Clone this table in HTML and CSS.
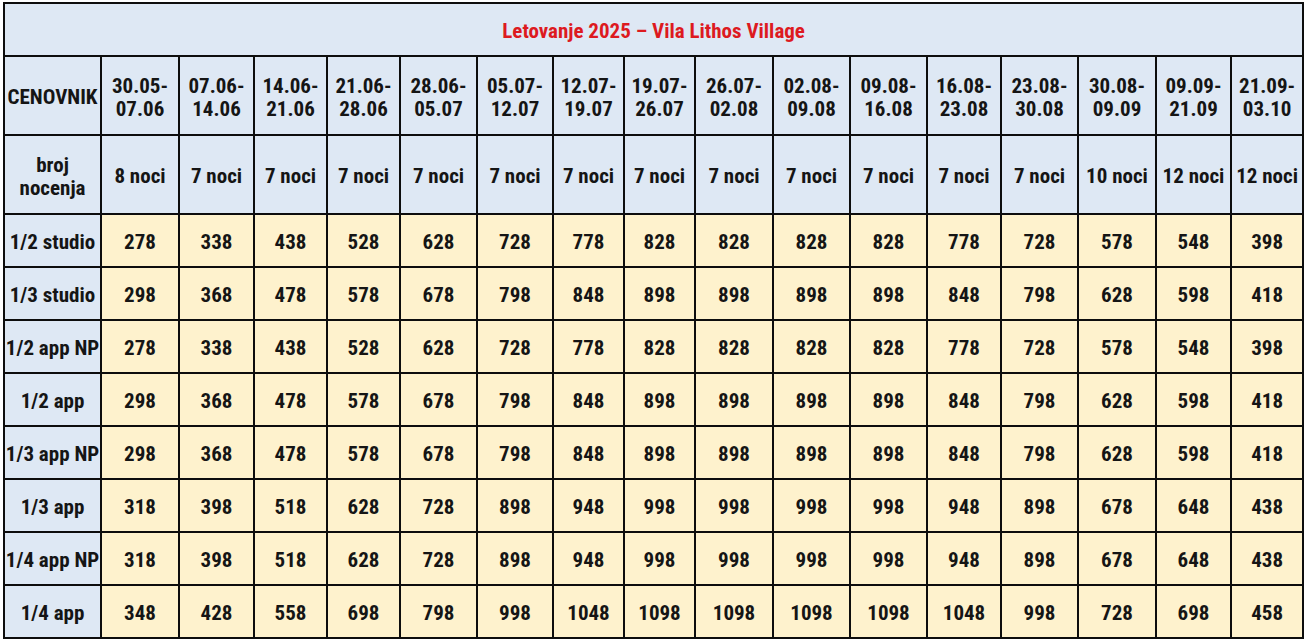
FILE: index.html
```html
<!DOCTYPE html>
<html lang="sr">
<head>
<meta charset="utf-8">
<title>Letovanje 2025 – Vila Lithos Village</title>
<link rel="stylesheet" href="styles.css">
</head>
<body>
<table class="price">
  <colgroup>
    <col class="w97"><col class="w78"><col class="w75"><col class="w73"><col class="w73"><col class="w77"><col class="w76"><col class="w71"><col class="w71"><col class="w78"><col class="w77"><col class="w77"><col class="w74"><col class="w77"><col class="w78"><col class="w75"><col class="w72">
  </colgroup>
  <thead>
    <tr class="title-row"><th colspan="17" class="title">Letovanje 2025 – Vila Lithos Village</th></tr>
    <tr class="head-row">
      <th>CENOVNIK</th>
      <th>30.05-<br>07.06</th><th>07.06-<br>14.06</th><th>14.06-<br>21.06</th><th>21.06-<br>28.06</th><th>28.06-<br>05.07</th><th>05.07-<br>12.07</th><th>12.07-<br>19.07</th><th>19.07-<br>26.07</th><th>26.07-<br>02.08</th><th>02.08-<br>09.08</th><th>09.08-<br>16.08</th><th>16.08-<br>23.08</th><th>23.08-<br>30.08</th><th>30.08-<br>09.09</th><th>09.09-<br>21.09</th><th>21.09-<br>03.10</th>
    </tr>
    <tr class="head-row">
      <th>broj<br>nocenja</th>
      <th>8 noci</th><th>7 noci</th><th>7 noci</th><th>7 noci</th><th>7 noci</th><th>7 noci</th><th>7 noci</th><th>7 noci</th><th>7 noci</th><th>7 noci</th><th>7 noci</th><th>7 noci</th><th>7 noci</th><th>10 noci</th><th>12 noci</th><th>12 noci</th>
    </tr>
  </thead>
  <tbody>
    <tr><th>1/2 studio</th><td>278</td><td>338</td><td>438</td><td>528</td><td>628</td><td>728</td><td>778</td><td>828</td><td>828</td><td>828</td><td>828</td><td>778</td><td>728</td><td>578</td><td>548</td><td>398</td></tr>
    <tr><th>1/3 studio</th><td>298</td><td>368</td><td>478</td><td>578</td><td>678</td><td>798</td><td>848</td><td>898</td><td>898</td><td>898</td><td>898</td><td>848</td><td>798</td><td>628</td><td>598</td><td>418</td></tr>
    <tr><th>1/2 app NP</th><td>278</td><td>338</td><td>438</td><td>528</td><td>628</td><td>728</td><td>778</td><td>828</td><td>828</td><td>828</td><td>828</td><td>778</td><td>728</td><td>578</td><td>548</td><td>398</td></tr>
    <tr><th>1/2 app</th><td>298</td><td>368</td><td>478</td><td>578</td><td>678</td><td>798</td><td>848</td><td>898</td><td>898</td><td>898</td><td>898</td><td>848</td><td>798</td><td>628</td><td>598</td><td>418</td></tr>
    <tr><th>1/3 app NP</th><td>298</td><td>368</td><td>478</td><td>578</td><td>678</td><td>798</td><td>848</td><td>898</td><td>898</td><td>898</td><td>898</td><td>848</td><td>798</td><td>628</td><td>598</td><td>418</td></tr>
    <tr><th>1/3 app</th><td>318</td><td>398</td><td>518</td><td>628</td><td>728</td><td>898</td><td>948</td><td>998</td><td>998</td><td>998</td><td>998</td><td>948</td><td>898</td><td>678</td><td>648</td><td>438</td></tr>
    <tr><th>1/4 app NP</th><td>318</td><td>398</td><td>518</td><td>628</td><td>728</td><td>898</td><td>948</td><td>998</td><td>998</td><td>998</td><td>998</td><td>948</td><td>898</td><td>678</td><td>648</td><td>438</td></tr>
    <tr><th>1/4 app</th><td>348</td><td>428</td><td>558</td><td>698</td><td>798</td><td>998</td><td>1048</td><td>1098</td><td>1098</td><td>1098</td><td>1098</td><td>1048</td><td>998</td><td>728</td><td>698</td><td>458</td></tr>
  </tbody>
</table>
</body>
</html>
```
FILE: styles.css
```css
html, body {
  margin: 0;
  padding: 0;
  background: #ffffff;
}
body {
  padding: 2px 3px;
}
.price {
  border-collapse: collapse;
  table-layout: fixed;
  width: 1300px;
  font-family: "Roboto Condensed", "DejaVu Sans Condensed", "Liberation Sans Narrow", Roboto, sans-serif;
  font-stretch: condensed;
  font-weight: 700;
  font-size: 21px;
  color: #151515;
}
.price th, .price td {
  border: 2px solid #0d0d0d;
  padding: 0;
  text-align: center;
  vertical-align: middle;
  font-weight: 700;
  line-height: 23px;
}
.price thead th, .price tbody th {
  background: #dee8f4;
}
.price td {
  background: #fef2cd;
}
.title-row th { height: 47px; padding-top: 4px; }
.head-row th { height: 73px; padding-top: 4px; }
.price tbody tr th, .price tbody tr td { height: 47px; padding-top: 4px; }
.title {
  color: #dd1a1f;
  font-size: 21px;
}
.w97 { width: 97px; }
.w78 { width: 78px; }
.w77 { width: 77px; }
.w76 { width: 76px; }
.w75 { width: 75px; }
.w74 { width: 74px; }
.w73 { width: 73px; }
.w72 { width: 72px; }
.w71 { width: 71px; }
```
